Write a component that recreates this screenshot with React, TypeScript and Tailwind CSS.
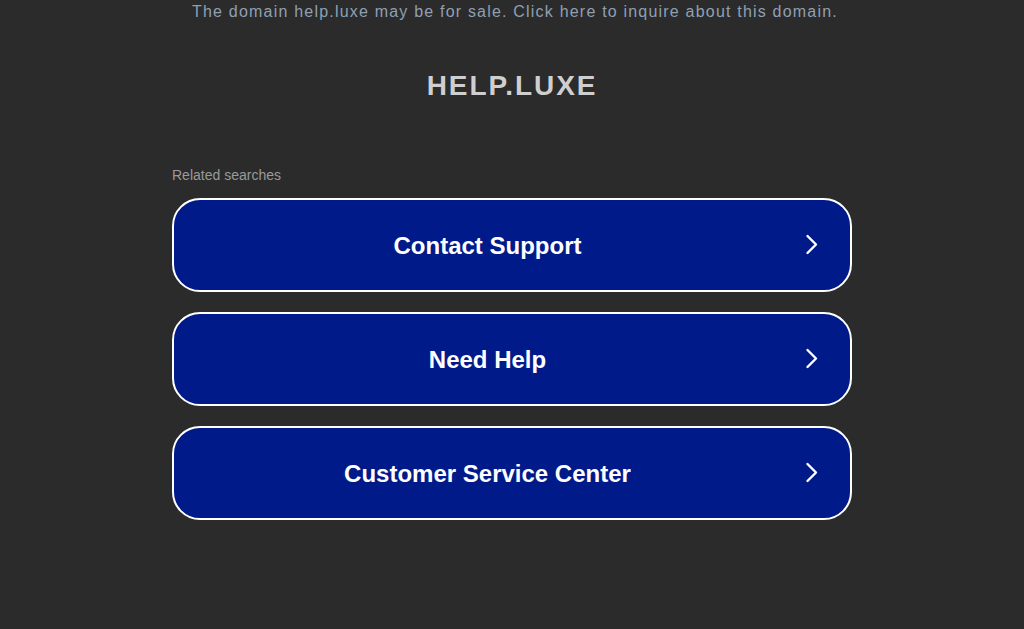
import React from 'react';

const links = ['Contact Support', 'Need Help', 'Customer Service Center'];

function Chevron() {
  return (
    <svg width="20" height="24" viewBox="0 0 20 24" fill="none" className="shrink-0">
      <path d="M6.5 3 L15 11.5 L6.5 20" stroke="white" strokeWidth="2.4" strokeLinecap="round" strokeLinejoin="round" />
    </svg>
  );
}

export default function App() {
  return (
    <div className="min-h-[629px] bg-[#2b2b2b] flex flex-col items-center" style={{ fontFamily: '"Liberation Sans", Arial, sans-serif' }}>
      <p className="pt-[2px] pl-[6px] text-[16px] leading-[20px] tracking-[1.2px] text-[#8fa0b3]">
        The domain help.luxe may be for sale. Click here to inquire about this domain.
      </p>
      <h1 className="mt-[48px] text-[28px] leading-[32px] font-bold tracking-[1.9px] text-[#cfcfcf]">HELP.LUXE</h1>

      <div className="mt-[65px] w-[680px]">
        <div className="text-[14px] leading-[16px] text-[#9a9a9a] mb-[15px]">Related searches</div>
        <div className="flex flex-col gap-[20px]">
          {links.map((l) => (
            <div key={l} className="h-[94px] rounded-[28px] border-2 border-white bg-[#011a8a] flex items-center pr-[29px]">
              <span className="flex-1 pt-[2px] text-center text-[24px] font-bold text-white">{l}</span>
              <Chevron />
            </div>
          ))}
        </div>
      </div>
    </div>
  );
}
